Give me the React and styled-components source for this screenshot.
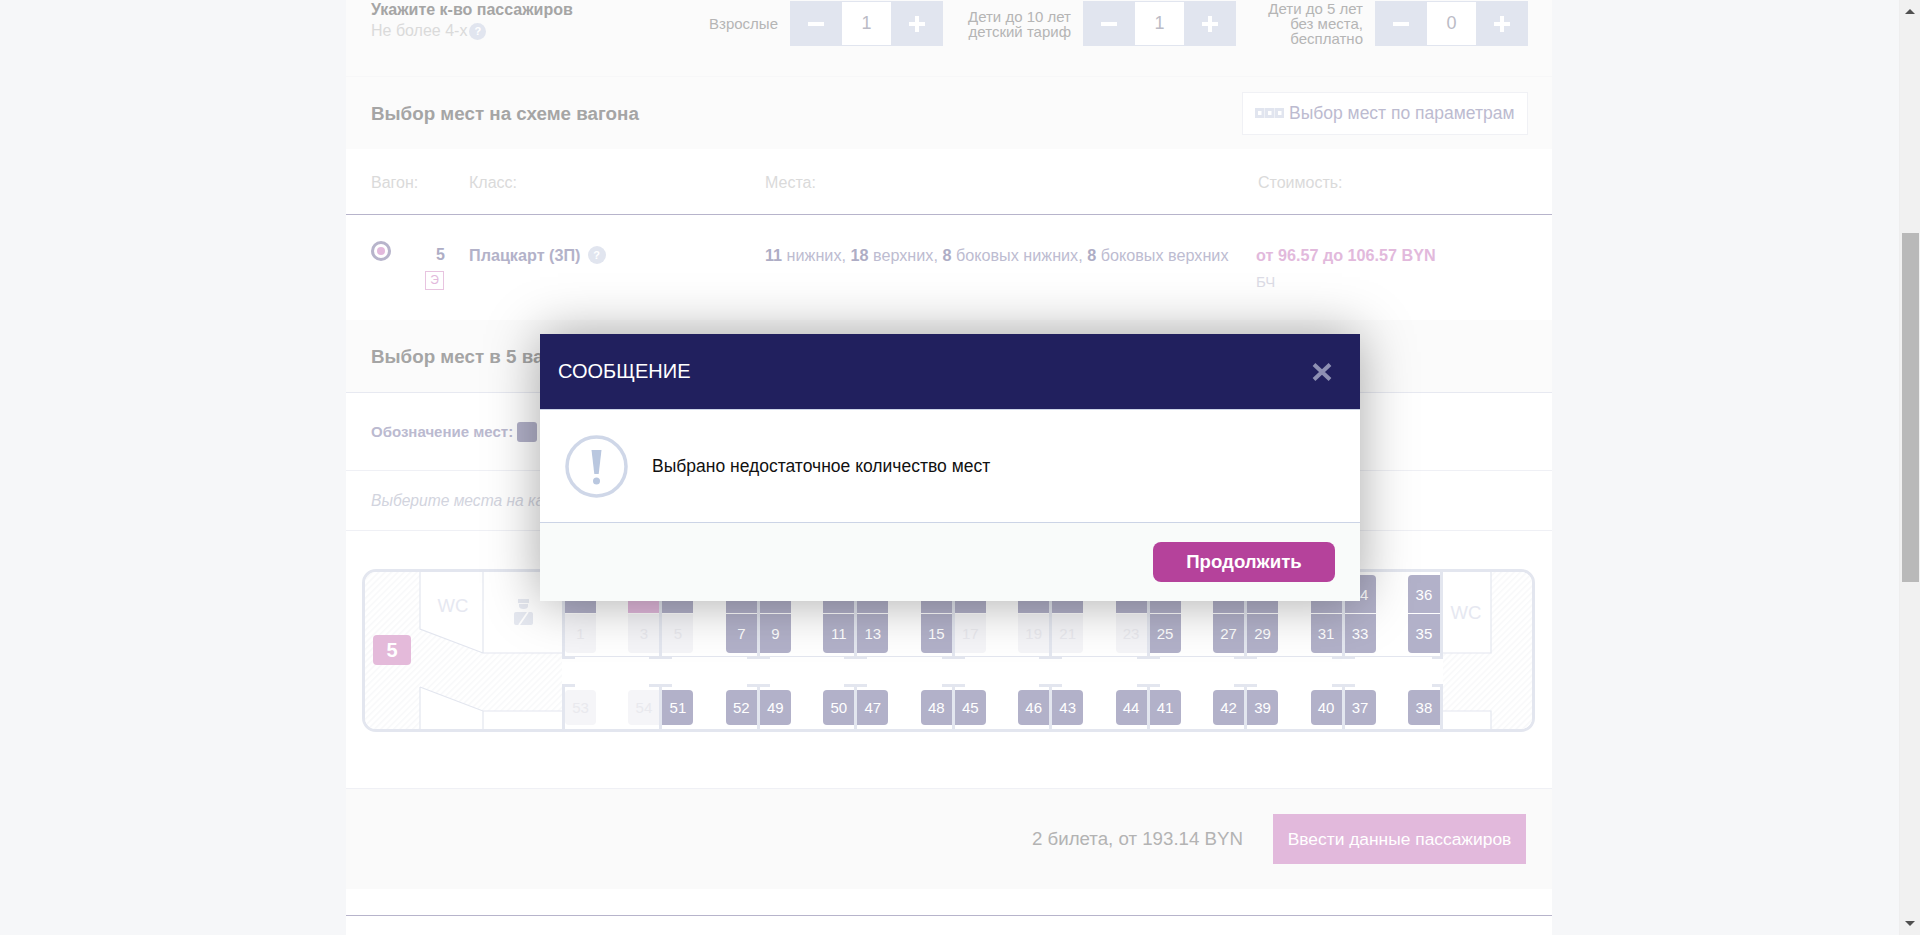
import React from "react";
import styled, { createGlobalStyle, css } from "styled-components";

const Global = createGlobalStyle`
  html, body { margin: 0; padding: 0; height: 100%; overflow: hidden; }
  body { font-family: "Liberation Sans", Arial, sans-serif; background: #f6f7f9; }
  * { box-sizing: border-box; }
`;

const Viewport = styled.div`
  display: flex;
  height: 935px;
  overflow: hidden;
  background: #f6f7f9;
`;
const PageArea = styled.main`
  flex: 1;
  min-width: 0;
  padding-left: 346px;
`;
const Card = styled.div`
  width: 1206px;
  background: #fff;
  height: 935px;
  overflow: hidden;
`;

const PassengersRow = styled.section`
  display: flex;
  height: 77px;
  padding: 1px 24px 0 25px;
  background: #fbfbfb;
  border-bottom: 1px solid #f7f7f8;
`;
const PassengersHint = styled.div`
  flex: 1;
  margin-top: -1px;
`;
const PassengersTitle = styled.div`
  font-size: 16px;
  line-height: 20px;
  font-weight: 700;
  color: #a5a5a5;
`;
const PassengersNote = styled.div`
  display: flex;
  align-items: center;
  gap: 2px;
  margin-top: 2px;
  font-size: 16px;
  line-height: 18px;
  color: #dadada;
`;
const Help = styled.span`
  display: inline-flex;
  align-items: center;
  justify-content: center;
  width: ${(p) => p.$size}px;
  height: ${(p) => p.$size}px;
  border-radius: 50%;
  background: #e1e5ef;
  color: #fff;
  font-size: 11px;
  font-weight: 700;
`;
const PaxGroup = styled.div`
  display: flex;
  justify-content: flex-end;
  align-items: center;
  gap: 12px;
  width: ${(p) => p.$width}px;
  height: 45px;
`;
const PaxLabel = styled.div`
  font-size: 15px;
  line-height: 15px;
  color: #b5b5b5;
  text-align: right;
  white-space: nowrap;
`;
const Stepper = styled.div`
  display: flex;
  width: 153px;
  height: 45px;
  background: #e1e5ef;
`;
const StepButton = styled.div`
  flex: 1;
  background-image: linear-gradient(#fff, #fff)${(p) => (p.$plus ? ", linear-gradient(#fff, #fff)" : "")};
  background-repeat: no-repeat;
  background-position: center;
  background-size: 16px 4px${(p) => (p.$plus ? ", 4px 16px" : "")};
`;
const StepValue = styled.div`
  display: flex;
  align-items: center;
  justify-content: center;
  width: 49px;
  margin: 1px 0;
  background: #fff;
  color: #bbbbc6;
  font-size: 18px;
`;

const SectionHead = styled.section`
  display: flex;
  align-items: center;
  justify-content: space-between;
  height: ${(p) => p.$height}px;
  padding: 1px 24px 0 25px;
  background: #fbfbfb;
  ${(p) => p.$rule && css`border-bottom: 1px solid #e7e9f1;`}
`;
const SectionTitle = styled.h2`
  margin: 0;
  font-size: 18.8px;
  font-weight: 700;
  color: #a5a5a5;
`;
const ParamsButton = styled.div`
  display: flex;
  align-items: center;
  gap: 5px;
  height: 43px;
  width: 286px;
  padding-left: 12px;
  margin-top: -1px;
  background: #fff;
  border: 1px solid #f0f1f5;
  color: #bcbbd0;
  font-size: 17.5px;
  white-space: nowrap;
`;

const WagonGrid = styled.div`
  display: grid;
  grid-template-columns: 98px 296px 491px 1fr;
  padding-left: 25px;
`;
const WagonHeader = styled(WagonGrid)`
  align-items: center;
  height: 66px;
  padding-top: 2px;
  border-bottom: 1px solid #b7b4cb;
  color: #dadada;
  font-size: 16px;
`;
const CostHead = styled.div`
  padding-left: 2px;
`;
const WagonRow = styled(WagonGrid)`
  height: 105px;
  padding-top: 30px;
  font-size: 16.2px;
  line-height: 20px;
  color: #bdbcd1;
`;
const WagonCell = styled.div`
  display: flex;
  width: 74px;
  justify-content: space-between;
`;
const Radio = styled.div`
  width: 20px;
  height: 20px;
  margin-top: -4px;
  border: 3px solid #b7b4cb;
  border-radius: 50%;
  display: flex;
  align-items: center;
  justify-content: center;
  &::after {
    content: "";
    width: 8px;
    height: 8px;
    border-radius: 50%;
    background: #e2b9dc;
  }
`;
const WagonNumber = styled.div`
  display: flex;
  flex-direction: column;
  align-items: flex-end;
  font-weight: 700;
  font-size: 16px;
  color: #aeadc5;
`;
const ClassBadge = styled.div`
  width: 19px;
  height: 19px;
  margin: 6px 1px 0 0;
  border: 1px solid #e8c4e0;
  color: #e2b9dc;
  font-size: 12px;
  font-weight: 400;
  line-height: 17px;
  text-align: center;
`;
const ClassName = styled.div`
  display: flex;
  align-items: center;
  gap: 7px;
  height: 20px;
  font-weight: 700;
  font-size: 16.2px;
  color: #b3b2c9;
`;
const Strong = styled.b`
  color: #aeadc5;
`;
const Price = styled.div`
  font-weight: 700;
  color: #e2b9dc;
  font-size: 16.2px;
`;
const Carrier = styled.div`
  margin-top: 7px;
  color: #dcdce6;
  font-size: 15px;
`;

const LegendRow = styled.div`
  display: flex;
  align-items: center;
  gap: 4px;
  height: 78px;
  padding-left: 25px;
  border-bottom: 1px solid #eff0f5;
  font-size: 15px;
  font-weight: 700;
  color: #bbbad0;
`;
const LegendSwatch = styled.span`
  width: 20px;
  height: 20px;
  border-radius: 3px;
  background: #b2b1c9;
`;
const HintRow = styled.div`
  display: flex;
  align-items: center;
  height: 60px;
  padding-left: 25px;
  border-bottom: 1px solid #eff0f5;
  font-size: 15.6px;
  font-style: italic;
  color: #d2d4de;
`;
const SchemeSection = styled.div`
  height: 257px;
  padding: 38px 0 0 16px;
`;
const Coach = styled.div`
  position: relative;
  display: flex;
  width: 1173px;
  height: 163px;
  border: 3px solid #e3e6ef;
  border-radius: 14px;
  overflow: hidden;
`;
const CoachBadge = styled.div`
  position: absolute;
  left: 8px;
  top: 63px;
  width: 38px;
  height: 30px;
  border-radius: 4px;
  background: #e4bada;
  color: #fff;
  font-size: 20px;
  font-weight: 700;
  line-height: 30px;
  text-align: center;
`;
const EndDrawing = styled.svg`
  display: block;
  flex: none;
`;
const SeatArea = styled.div`
  width: 881px;
  flex: none;
`;
const TopDeck = styled.div`
  display: flex;
  justify-content: space-between;
  height: 85px;
  border-bottom: 1px solid #e3e6ef;
`;
const LowerDeck = styled.div`
  display: flex;
  justify-content: space-between;
  height: 45px;
  margin-top: 27px;
`;
const Bay = styled.div`
  display: flex;
  height: ${(p) => (p.$lower ? 45 : 87)}px;
  flex: none;
`;
const Post = styled.div`
  position: relative;
  width: 3px;
  background: #e3e6ef;
  &::after {
    content: "";
    position: absolute;
    height: 3px;
    background: #e3e6ef;
    ${(p) => (p.$lower ? "top: 0;" : "bottom: 0;")}
    ${(p) =>
      p.$end === "first"
        ? "left: 0; width: 13px;"
        : p.$end === "last"
        ? "right: 0; width: 11px;"
        : "left: -10px; width: 23px;"}
  }
`;
const SeatColumn = styled.div`
  display: flex;
  flex-direction: column;
  width: ${(p) => p.$width || 31}px;
  padding-top: ${(p) => (p.$lower ? 6 : 3)}px;
  gap: 1px;
`;
const seatPalette = {
  free: "background:#b2b1c9;color:#fff;",
  taken: "background:#f5f5f8;color:#e9e9ee;",
  chosen: "background:#e2b9dc;color:#fff;",
};
const Seat = styled.div`
  display: flex;
  align-items: center;
  justify-content: center;
  height: ${(p) => p.$h}px;
  font-size: 15px;
  ${(p) => seatPalette[p.$state]}
  ${(p) => {
    const r = "4px";
    const top = p.$rows !== "bottom";
    const bottom = p.$rows !== "top";
    const left = p.$side !== "right";
    const right = p.$side !== "left";
    return `border-radius:${top && left ? r : 0} ${top && right ? r : 0} ${bottom && right ? r : 0} ${bottom && left ? r : 0};`;
  }}
`;

const FooterBar = styled.section`
  display: flex;
  align-items: center;
  justify-content: flex-end;
  height: 101px;
  padding: 0 26px 0 0;
  margin-bottom: 26px;
  background: #fafafa;
  border-top: 1px solid #eff0f5;
  gap: 30px;
`;
const FooterSum = styled.div`
  font-size: 18.7px;
  color: #b3b3b3;
`;
const FooterButton = styled.div`
  display: flex;
  align-items: center;
  justify-content: center;
  width: 253px;
  height: 50px;
  background: #e2b9dc;
  color: #fff;
  font-size: 17.4px;
  white-space: nowrap;
`;
const NextBlockLine = styled.div`
  border-top: 1px solid #b7b4cb;
`;

const Scrollbar = styled.div`
  display: flex;
  flex: none;
  flex-direction: column;
  align-items: center;
  width: 21px;
  height: 935px;
  background: #f1f1f1;
  border-left: 1px solid #eeeeef;
`;
const ScrollArrow = styled.div`
  width: 0;
  height: 0;
  flex: none;
  border-left: 5px solid transparent;
  border-right: 5px solid transparent;
  ${(p) =>
    p.$down
      ? "border-top: 5px solid #505050; margin-top: auto; margin-bottom: 9px;"
      : "border-bottom: 5px solid #505050; margin-top: 9px;"}
`;
const ScrollThumb = styled.div`
  width: 17px;
  height: 349px;
  margin-top: 219px;
  background: #b9b9b9;
`;

const Overlay = styled.div`
  position: fixed;
  left: 540px;
  top: 334px;
  width: 820px;
  height: 267px;
  display: flex;
  flex-direction: column;
  box-shadow: 0 0 50px rgba(0, 0, 0, 0.35);
`;
const ModalHead = styled.header`
  display: flex;
  align-items: center;
  justify-content: space-between;
  height: 75px;
  padding: 0 28px 0 18px;
  background: #21205e;
  color: #fff;
  font-size: 20px;
`;
const ModalBody = styled.div`
  display: flex;
  align-items: center;
  gap: 24px;
  height: 114px;
  padding: 0 0 0 25px;
  background: #fff;
  border-top: 1px solid #ccd4e6;
  border-bottom: 1px solid #ccd4e6;
  color: #111;
  font-size: 17.5px;
`;
const ModalFoot = styled.footer`
  flex: 1;
  display: flex;
  justify-content: flex-end;
  padding: 19px 25px 0 0;
  background: #f9fbfa;
`;
const ModalButton = styled.div`
  display: flex;
  align-items: center;
  justify-content: center;
  width: 182px;
  height: 40px;
  border-radius: 8px;
  background: #b5429b;
  color: #fff;
  font-size: 18.6px;
  font-weight: 700;
`;

const HatchDefs = ({ id }) => (
  <defs>
    <pattern id={id} width="4.500" height="4.500" patternUnits="userSpaceOnUse" patternTransform="rotate(45)">
      <rect width="4.500" height="4.500" fill="#fff" />
      <rect width="1.500" height="4.500" fill="#f8f9fa" />
    </pattern>
  </defs>
);

const LeftEnd = () => (
  <EndDrawing width="197" height="157" viewBox="0 0 197 157">
    <HatchDefs id="hatchL" />
    <path d="M0 0H55V57L118 81H197V139H118L55 115V157H0Z" fill="url(#hatchL)" />
    <path d="M55 0V57L118 81H197M118 0V81M55 115L118 139H197M55 115V157M118 139V157" fill="none" stroke="#e3e6ef" strokeWidth="1.2" />
    <text x="88" y="40" textAnchor="middle" fontSize="18.5" fill="#e6e8f1" fontFamily="Liberation Sans">WC</text>
    <path d="M153 27h11v4h-11zM154 32h9v2a4.500 3 0 0 1-9 0z" fill="#e6e9f1" />
    <rect x="149" y="40" width="19" height="13" rx="2" fill="#e6e9f1" />
    <path d="M154 53l9-13" stroke="#fff" strokeWidth="1.800" />
  </EndDrawing>
);

const RightEnd = () => (
  <EndDrawing width="89" height="157" viewBox="0 0 89 157">
    <HatchDefs id="hatchR" />
    <path d="M48 0H89V157H48V139H0V81H48Z" fill="url(#hatchR)" />
    <path d="M0 81H48V0M0 139H48V157" fill="none" stroke="#e3e6ef" strokeWidth="1.2" />
    <text x="23" y="47" textAnchor="middle" fontSize="18.5" fill="#e6e8f1" fontFamily="Liberation Sans">WC</text>
  </EndDrawing>
);

const ParamsIcon = () => (
  <svg width="29" height="10" viewBox="0 0 29 10">
    {[0, 10, 20].map((x) => (
      <rect key={x} x={x + 1.5} y="1.5" width="6.500" height="7" fill="#fff" stroke="#e1e5ef" strokeWidth="3" />
    ))}
  </svg>
);

const CloseIcon = () => (
  <svg width="20" height="18" viewBox="0 0 20 18">
    <path d="M2 1.500L18 16.500M18 1.500L2 16.500" stroke="#8e90b3" strokeWidth="4" />
  </svg>
);

const AlertIcon = () => (
  <svg width="63" height="63" viewBox="0 0 63 63">
    <circle cx="31.500" cy="31.500" r="29.500" fill="#fff" stroke="#cfd7e8" strokeWidth="3.500" />
    <path d="M26.500 15h10l-2.800 24h-4.400z" fill="#b9c7df" />
    <circle cx="31.500" cy="46" r="3.500" fill="#b9c7df" />
  </svg>
);

const TAKEN = new Set([1, 3, 5, 17, 19, 21, 23, 53, 54]);
const state = (n) => (n === 4 ? "chosen" : TAKEN.has(n) ? "taken" : "free");

const bays = [
  { end: "first", left: [2, 1], low: [53] },
  { left: [4, 3], right: [6, 5], low: [54, 51] },
  { left: [8, 7], right: [10, 9], low: [52, 49] },
  { left: [12, 11], right: [14, 13], low: [50, 47] },
  { left: [16, 15], right: [18, 17], low: [48, 45] },
  { left: [20, 19], right: [22, 21], low: [46, 43] },
  { left: [24, 23], right: [26, 25], low: [44, 41] },
  { left: [28, 27], right: [30, 29], low: [42, 39] },
  { left: [32, 31], right: [34, 33], low: [40, 37] },
  { end: "last", left: [36, 35], low: [38] },
];

const UpperColumn = ({ pair, side, width }) => (
  <SeatColumn $width={width}>
    <Seat $h={38} $rows="top" $side={side} $state={state(pair[0])}>{pair[0]}</Seat>
    <Seat $h={39} $rows="bottom" $side={side} $state={state(pair[1])}>{pair[1]}</Seat>
  </SeatColumn>
);
const LowerColumn = ({ n, side, width }) => (
  <SeatColumn $lower $width={width}>
    <Seat $h={35} $rows="all" $side={side} $state={state(n)}>{n}</Seat>
  </SeatColumn>
);

const UpperBay = ({ bay }) => {
  if (bay.end === "first")
    return (
      <Bay>
        <Post $end="first" />
        <UpperColumn pair={bay.left} side="both" />
      </Bay>
    );
  if (bay.end === "last")
    return (
      <Bay>
        <UpperColumn pair={bay.left} side="left" width={32} />
        <Post $end="last" />
      </Bay>
    );
  return (
    <Bay>
      <UpperColumn pair={bay.left} side="left" />
      <Post />
      <UpperColumn pair={bay.right} side="right" />
    </Bay>
  );
};
const LowerBay = ({ bay }) => {
  if (bay.end === "first")
    return (
      <Bay $lower>
        <Post $lower $end="first" />
        <LowerColumn n={bay.low[0]} side="both" />
      </Bay>
    );
  if (bay.end === "last")
    return (
      <Bay $lower>
        <LowerColumn n={bay.low[0]} side="left" width={32} />
        <Post $lower $end="last" />
      </Bay>
    );
  return (
    <Bay $lower>
      <LowerColumn n={bay.low[0]} side="left" />
      <Post $lower />
      <LowerColumn n={bay.low[1]} side="right" />
    </Bay>
  );
};

const PaxStepper = ({ value }) => (
  <Stepper>
    <StepButton />
    <StepValue>{value}</StepValue>
    <StepButton $plus />
  </Stepper>
);

export default function App() {
  return (
    <Viewport>
      <Global />
      <PageArea>
        <Card>
          <PassengersRow>
            <PassengersHint>
              <PassengersTitle>Укажите к-во пассажиров</PassengersTitle>
              <PassengersNote>Не более 4-х<Help $size={17}>?</Help></PassengersNote>
            </PassengersHint>
            <PaxGroup $width={293}>
              <PaxLabel>Взрослые</PaxLabel>
              <PaxStepper value={1} />
            </PaxGroup>
            <PaxGroup $width={293}>
              <PaxLabel>Дети до 10 лет<br />детский тариф</PaxLabel>
              <PaxStepper value={1} />
            </PaxGroup>
            <PaxGroup $width={292}>
              <PaxLabel>Дети до 5 лет<br />без места,<br />бесплатно</PaxLabel>
              <PaxStepper value={0} />
            </PaxGroup>
          </PassengersRow>

          <SectionHead $height={72}>
            <SectionTitle>Выбор мест на схеме вагона</SectionTitle>
            <ParamsButton><ParamsIcon />Выбор мест по параметрам</ParamsButton>
          </SectionHead>

          <WagonHeader>
            <div>Вагон:</div>
            <div>Класс:</div>
            <div>Места:</div>
            <CostHead>Стоимость:</CostHead>
          </WagonHeader>
          <WagonRow>
            <WagonCell>
              <Radio />
              <WagonNumber>5<ClassBadge>Э</ClassBadge></WagonNumber>
            </WagonCell>
            <ClassName>Плацкарт (3П)<Help $size={18}>?</Help></ClassName>
            <div>
              <Strong>11</Strong> нижних, <Strong>18</Strong> верхних, <Strong>8</Strong> боковых нижних, <Strong>8</Strong> боковых верхних
            </div>
            <div>
              <Price>от 96.57 до 106.57 BYN</Price>
              <Carrier>БЧ</Carrier>
            </div>
          </WagonRow>

          <SectionHead $height={73} $rule>
            <SectionTitle>Выбор мест в 5 вагоне</SectionTitle>
          </SectionHead>
          <LegendRow>Обозначение мест:<LegendSwatch /></LegendRow>
          <HintRow>Выберите места на карте вагона</HintRow>

          <SchemeSection>
            <Coach>
              <LeftEnd />
              <SeatArea>
                <TopDeck>
                  {bays.map((b, i) => <UpperBay key={i} bay={b} />)}
                </TopDeck>
                <LowerDeck>
                  {bays.map((b, i) => <LowerBay key={i} bay={b} />)}
                </LowerDeck>
              </SeatArea>
              <RightEnd />
              <CoachBadge>5</CoachBadge>
            </Coach>
          </SchemeSection>

          <FooterBar>
            <FooterSum>2 билета, от 193.14 BYN</FooterSum>
            <FooterButton>Ввести данные пассажиров</FooterButton>
          </FooterBar>
          <NextBlockLine />
        </Card>
      </PageArea>
      <Scrollbar>
        <ScrollArrow />
        <ScrollThumb />
        <ScrollArrow $down />
      </Scrollbar>

      <Overlay>
        <ModalHead>СООБЩЕНИЕ<CloseIcon /></ModalHead>
        <ModalBody><AlertIcon />Выбрано недостаточное количество мест</ModalBody>
        <ModalFoot><ModalButton>Продолжить</ModalButton></ModalFoot>
      </Overlay>
    </Viewport>
  );
}
